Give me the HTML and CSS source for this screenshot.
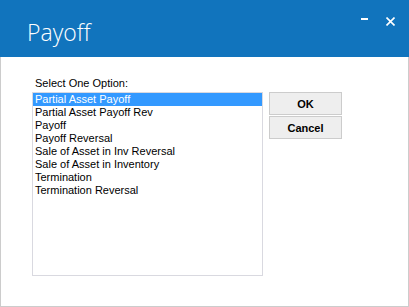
FILE: index.html
```html
<!DOCTYPE html>
<html lang="en">
<head>
    <meta charset="UTF-8">
    <title>Payoff</title>
    <link rel="stylesheet" href="styles.css">
</head>
<body>
<div class="window">
    <div class="titlebar">
        <div class="title">Payoff</div>
        <div class="controls">
            <span class="ctl min"><span class="bar"></span></span>
            <span class="ctl close">
                <svg width="9" height="9" viewBox="0 0 9 9"><path d="M0.5 0.5 L8.5 8.5 M8.5 0.5 L0.5 8.5" stroke="#fff" stroke-width="1.6" fill="none"/></svg>
            </span>
        </div>
    </div>
    <div class="content">
        <div class="left">
            <div class="label">Select One Option:</div>
            <div class="listbox">
                <div class="item selected">Partial Asset Payoff</div>
                <div class="item">Partial Asset Payoff Rev</div>
                <div class="item">Payoff</div>
                <div class="item">Payoff Reversal</div>
                <div class="item">Sale of Asset in Inv Reversal</div>
                <div class="item">Sale of Asset in Inventory</div>
                <div class="item">Termination</div>
                <div class="item">Termination Reversal</div>
            </div>
        </div>
        <div class="buttons">
            <button class="btn">OK</button>
            <button class="btn">Cancel</button>
        </div>
    </div>
</div>
</body>
</html>
```

FILE: styles.css
```css
/* dialog window */
body {
    margin: 0;
    font-family: "Liberation Sans", Arial, sans-serif;
}
.window {
    width: 409px;
    height: 307px;
    box-sizing: border-box;
    border: 1px solid #cccccc;
    border-top: none;
    background: #fff;
}
.titlebar {
    height: 57px;
    margin: 0 -1px;
    background: #1174bd;
    display: flex;
    color: #fff;
}
.title {
    font-family: "Open Sans", sans-serif;
    font-weight: 300;
    font-size: 23px;
    padding: 16px 0 0 27px;
}
.controls {
    margin-left: auto;
    display: flex;
    padding: 12px 14px 0 0;
    gap: 16px;
}
.ctl {
    display: block;
    width: 9px;
    height: 9px;
}
.min .bar {
    display: block;
    width: 7px;
    height: 2px;
    margin-top: 6px;
    background: #fff;
}
.content {
    display: flex;
    padding: 20px 0 0 31px;
}
.label {
    font-size: 11px;
    line-height: 13px;
    margin: 0 0 2px 3px;
    color: #000;
}
.listbox {
    width: 231px;
    height: 184px;
    box-sizing: border-box;
    border: 1px solid #d9d9e0;
}
.item {
    font-size: 11px;
    line-height: 13px;
    height: 13px;
    padding-left: 2px;
    color: #000;
    white-space: nowrap;
}
.item.selected {
    background: #3399ff;
    color: #fff;
}
.buttons {
    display: flex;
    flex-direction: column;
    gap: 1px;
    margin: 15px 0 0 6px;
}
.btn {
    width: 73px;
    height: 23px;
    margin: 0;
    padding: 0;
    background: #eeeeee;
    border: 1px solid #cccccc;
    font-family: "Liberation Sans", Arial, sans-serif;
    font-size: 11px;
    font-weight: bold;
    color: #000;
}
```
